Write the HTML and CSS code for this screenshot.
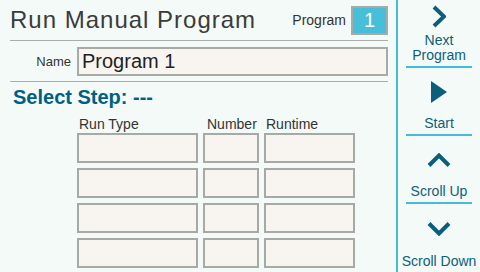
FILE: index.html
```html
<!DOCTYPE html>
<html lang="en">
<head>
    <meta charset="UTF-8">
    <meta name="viewport" content="width=device-width, initial-scale=1.0">
    <title>Run Manual Program</title>
    <link rel="stylesheet" href="styles.css">
</head>
<body>
    <div class="screen">
        <div class="main">
            <div class="header">
                <h1 class="title">Run Manual Program</h1>
                <span class="program-label">Program</span>
                <div class="program-box">1</div>
            </div>
            <div class="name-row">
                <span class="name-label">Name</span>
                <div class="name-box">Program 1</div>
            </div>
            <div class="step-title">Select Step: ---</div>
            <div class="step-head">
                <span class="col-run">Run Type</span>
                <span class="col-num">Number</span>
                <span class="col-time">Runtime</span>
            </div>
            <div class="step-grid">
                <div class="cell"></div><div class="cell"></div><div class="cell"></div>
                <div class="cell"></div><div class="cell"></div><div class="cell"></div>
                <div class="cell"></div><div class="cell"></div><div class="cell"></div>
                <div class="cell"></div><div class="cell"></div><div class="cell"></div>
            </div>
        </div>
        <div class="sidebar">
            <div class="side-btn">
                <div class="side-icon">
                    <svg width="14" height="23" viewBox="0 0 14 23"><polyline points="2,2 12,11.5 2,21" fill="none" stroke="#0b5f7d" stroke-width="4"/></svg>
                </div>
                <div class="side-text">Next<br>Program</div>
            </div>
            <div class="side-btn">
                <div class="side-icon">
                    <svg width="16" height="22" viewBox="0 0 16 22"><polygon points="0,0 16,11 0,22" fill="#0b5f7d"/></svg>
                </div>
                <div class="side-text">Start</div>
            </div>
            <div class="side-btn">
                <div class="side-icon">
                    <svg width="24" height="14" viewBox="0 0 24 14"><polyline points="2,12.5 12,2.5 22,12.5" fill="none" stroke="#0b5f7d" stroke-width="4"/></svg>
                </div>
                <div class="side-text">Scroll Up</div>
            </div>
            <div class="side-btn last">
                <div class="side-icon">
                    <svg width="24" height="14" viewBox="0 0 24 14"><polyline points="2,1.5 12,11.5 22,1.5" fill="none" stroke="#0b5f7d" stroke-width="4"/></svg>
                </div>
                <div class="side-text">Scroll Down</div>
            </div>
        </div>
    </div>
</body>
</html>
```
FILE: styles.css
```css
body {
    margin: 0;
    font-family: "Liberation Sans", Arial, sans-serif;
    background-color: #f4faf7;
}
.screen {
    display: flex;
    width: 480px;
    height: 272px;
    overflow: hidden;
}
.main {
    width: 378px;
    padding: 0 8px 0 10px;
}
.header {
    display: flex;
    align-items: center;
    height: 40px;
    border-bottom: 1px solid #aaaeaa;
}
.title {
    flex: 1;
    margin: 0;
    font-size: 24px;
    font-weight: normal;
    letter-spacing: 1px;
    line-height: 30px;
    color: #3a3c3a;
}
.program-label {
    font-size: 14px;
    color: #333;
    margin-right: 5px;
}
.program-box {
    width: 33px;
    height: 25px;
    border: 2px solid #a7aaa7;
    background-color: #48bfd8;
    color: white;
    font-size: 20px;
    line-height: 25px;
    text-align: center;
}
.name-row {
    display: flex;
    align-items: center;
    height: 40px;
    border-bottom: 1px solid #aaaeaa;
}
.name-label {
    width: 61px;
    text-align: right;
    margin-right: 6px;
    font-size: 13px;
    color: #333;
}
.name-box {
    flex: 1;
    height: 25px;
    border: 2px solid #a7aaa7;
    background-color: #f8f5f1;
    font-size: 20px;
    line-height: 25px;
    padding-left: 3px;
    color: #222;
}
.step-title {
    margin: 3px 0 0 3px;
    font-size: 20px;
    font-weight: bold;
    line-height: 24px;
    color: #005f82;
}
.step-head {
    display: grid;
    grid-template-columns: 121px 56px 91px;
    column-gap: 5px;
    margin: 7px 0 1px 67px;
    font-size: 14px;
    line-height: 16px;
    color: #333;
}
.col-run, .col-time {
    padding-left: 2px;
}
.col-num {
    padding-left: 4px;
}
.step-grid {
    display: grid;
    grid-template-columns: 121px 56px 91px;
    grid-auto-rows: 30px;
    gap: 5px;
    margin-left: 67px;
}
.cell {
    border: 2px solid #a6aaa6;
    background-color: #f8f5f1;
}
.sidebar {
    width: 82px;
    border-left: 2px solid #46bcd6;
    display: flex;
    flex-direction: column;
}
.side-btn {
    height: 66px;
    margin: 0 8px;
    border-bottom: 2px solid #46bcd6;
    display: flex;
    flex-direction: column;
    align-items: center;
}
.side-btn.last {
    border-bottom: none;
    height: 68px;
}
.side-icon {
    flex: 1;
    display: flex;
    align-items: center;
    justify-content: center;
}
.side-icon svg {
    display: block;
}
.side-text {
    font-size: 14px;
    line-height: 15px;
    padding-bottom: 3px;
    text-align: center;
    white-space: nowrap;
    color: #0b5f7d;
}
```
